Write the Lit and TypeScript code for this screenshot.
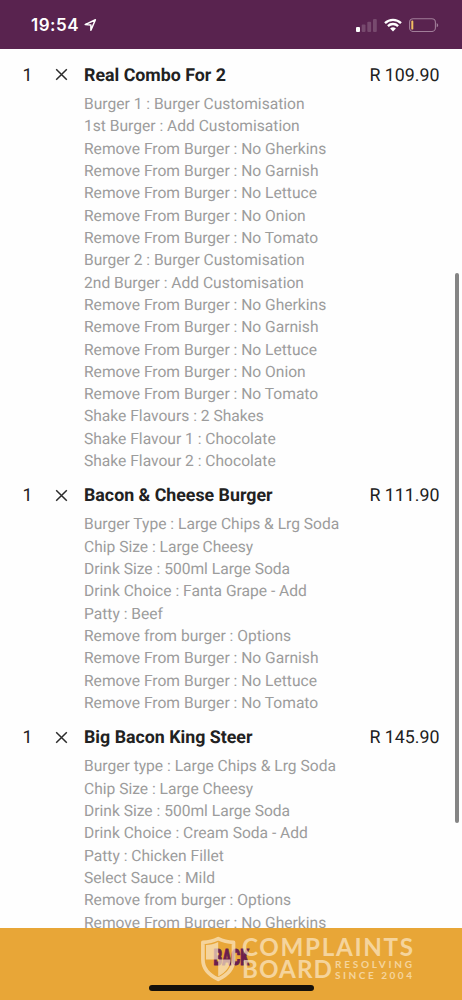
import { LitElement, html, css } from "lit";
import { customElement, property } from "lit/decorators.js";

interface OrderItem {
  qty: number;
  name: string;
  price: string;
  options: string[];
}

const ORDER: OrderItem[] = [
  {
    qty: 1,
    name: "Real Combo For 2",
    price: "R 109.90",
    options: [
      "Burger 1 : Burger Customisation",
      "1st Burger : Add Customisation",
      "Remove From Burger : No Gherkins",
      "Remove From Burger : No Garnish",
      "Remove From Burger : No Lettuce",
      "Remove From Burger : No Onion",
      "Remove From Burger : No Tomato",
      "Burger 2 : Burger Customisation",
      "2nd Burger : Add Customisation",
      "Remove From Burger : No Gherkins",
      "Remove From Burger : No Garnish",
      "Remove From Burger : No Lettuce",
      "Remove From Burger : No Onion",
      "Remove From Burger : No Tomato",
      "Shake Flavours : 2 Shakes",
      "Shake Flavour 1 : Chocolate",
      "Shake Flavour 2 : Chocolate",
    ],
  },
  {
    qty: 1,
    name: "Bacon & Cheese Burger",
    price: "R 111.90",
    options: [
      "Burger Type : Large Chips & Lrg Soda",
      "Chip Size : Large Cheesy",
      "Drink Size : 500ml Large Soda",
      "Drink Choice : Fanta Grape - Add",
      "Patty : Beef",
      "Remove from burger : Options",
      "Remove From Burger : No Garnish",
      "Remove From Burger : No Lettuce",
      "Remove From Burger : No Tomato",
    ],
  },
  {
    qty: 1,
    name: "Big Bacon King Steer",
    price: "R 145.90",
    options: [
      "Burger type : Large Chips & Lrg Soda",
      "Chip Size : Large Cheesy",
      "Drink Size : 500ml Large Soda",
      "Drink Choice : Cream Soda - Add",
      "Patty : Chicken Fillet",
      "Select Sauce : Mild",
      "Remove from burger : Options",
      "Remove From Burger : No Gherkins",
    ],
  },
];

@customElement("status-bar")
export class StatusBar extends LitElement {
  static styles = css`
    :host {
      display: flex;
      align-items: center;
      justify-content: space-between;
      box-sizing: border-box;
      height: 49px;
      padding: 1px 23px 0 31px;
      background: #59234f;
      color: #fff;
      font: 600 17px/20px Inter, sans-serif;
    }
    .left,
    .right {
      display: flex;
      align-items: center;
    }
    .left {
      gap: 5px;
    }
    .time {
      letter-spacing: 0.5px;
    }
    svg {
      display: block;
    }
    .wifi {
      margin: 0 7px 0 7px;
    }
  `;

  render() {
    return html`
      <div class="left">
        <span class="time">19:54</span>
        <svg width="13" height="14" viewBox="0 0 13 14">
          <path d="M1.2 6.6 11.4 1.7 6.9 12.2V7.1Z" fill="none" stroke="#fff" stroke-width="1.5" stroke-linejoin="round" />
        </svg>
      </div>
      <div class="right">
        <svg width="21" height="14" viewBox="0 0 21 14">
          <rect x="0" y="9" width="4" height="5" rx="1" fill="#fff" />
          <rect x="5.7" y="6.6" width="3.8" height="7.4" rx="1" fill="#774a6e" />
          <rect x="11.3" y="3.8" width="3.8" height="10.2" rx="1" fill="#774a6e" />
          <rect x="17" y="1" width="3.8" height="13" rx="1" fill="#774a6e" />
        </svg>
        <svg class="wifi" width="18" height="14" viewBox="0 0 18 14">
          <g fill="none" stroke="#fff" stroke-width="2.3">
            <path d="M1 5.1a11.4 11.4 0 0 1 16 0" />
            <path d="M3.9 8.1a7.3 7.3 0 0 1 10.2 0" />
          </g>
          <path d="M6.1 10.6a4.2 4.2 0 0 1 5.8 0L9 13.6Z" fill="#fff" />
        </svg>
        <svg width="30" height="14" viewBox="0 0 30 14">
          <rect x="0.6" y="0.7" width="25.8" height="12.8" rx="3.6" fill="none" stroke="#a17e99" stroke-width="1.1" />
          <rect x="2.3" y="2.6" width="2" height="9" rx="0.9" fill="#f2bd62" />
          <path d="M27.7 4.9c2 .9 2 3.5 0 4.4Z" fill="#a17e99" />
        </svg>
      </div>
    `;
  }
}

@customElement("order-item")
export class OrderItemRow extends LitElement {
  @property({ attribute: false }) item!: OrderItem;

  static styles = css`
    :host {
      display: grid;
      grid-template-columns: 32.5px 29px 1fr auto;
      align-items: center;
      row-gap: 5.4px;
      color: #212121;
      font: 400 17.8px/24px Roboto, sans-serif;
      text-rendering: geometricPrecision;
    }
    .name {
      font-weight: 700;
      white-space: nowrap;
    }
    .times {
      display: block;
      margin-bottom: 2px;
    }
    .options {
      grid-column: 3 / -1;
      margin: 0;
      padding: 0;
      list-style: none;
      color: #9c9c9c;
      font-size: 15.6px;
      line-height: 22.33px;
      white-space: nowrap;
    }
  `;

  render() {
    const { qty, name, price, options } = this.item;
    return html`
      <span>${qty}</span>
      <svg class="times" width="13" height="13" viewBox="0 0 13 13">
        <path d="M1.2 1.2 11.8 11.8M11.8 1.2 1.2 11.8" stroke="#2b2b2b" stroke-width="1.5" />
      </svg>
      <span class="name">${name}</span>
      <span class="price">${price}</span>
      <ul class="options">
        ${options.map((o) => html`<li>${o}</li>`)}
      </ul>
    `;
  }
}

@customElement("bottom-bar")
export class BottomBar extends LitElement {
  static styles = css`
    :host {
      display: flex;
      flex-direction: column;
      align-items: center;
      justify-content: space-between;
      box-sizing: border-box;
      height: 72px;
      padding: 18px 0 9px;
      position: relative;
      background: #e8a637;
    }
    .back {
      display: block;
    }
    .home {
      width: 165px;
      height: 6px;
      border-radius: 3px;
      background: #15110b;
    }
    .watermark {
      position: absolute;
      left: 196px;
      top: 4px;
    }
  `;

  render() {
    return html`
      <svg class="back" width="48" height="24" viewBox="0 0 48 24">
        <g transform="translate(6.5 19.3) scale(0.6 1)">
          <text x="0" y="0" textLength="59" lengthAdjust="spacingAndGlyphs" font-family="Roboto, sans-serif" font-weight="900" font-size="22" fill="#6b1f4d" stroke="#6b1f4d" stroke-width="1">BACK</text>
        </g>
      </svg>
      <svg class="watermark" width="224" height="52" viewBox="196 931 224 52">
        <g opacity="0.7" fill="#fbe8c8">
          <path d="M218.200 937.700c5 2.500 10.200 3.500 15.300 3.600v17.200c0 9-6 15.500-15.300 19.800c-9.300-4.300-15.300-10.800-15.300-19.800v-17.200c5.100-.1 10.300-1.100 15.300-3.600Z" fill="none" stroke="#fbe8c8" stroke-width="3.700" stroke-linejoin="round" />
          <path d="M218.200 941v17.500h-12.200v-14.500c4-.2 8.500-1 12.200-3Z" />
          <path d="M218.200 958.500h12.300c0 7-4.500 12.500-12.300 17Z" />
          <g font-family="Lato, sans-serif" font-weight="700">
            <text x="242" y="954.500" textLength="171" font-size="24.200">COMPLAINTS</text>
            <text x="242" y="977.300" textLength="90" font-size="24.200">BOARD</text>
            <text x="335" y="967" textLength="77" font-size="10">RESOLVING</text>
            <text x="335" y="977.500" textLength="77" font-size="10">SINCE 2004</text>
          </g>
        </g>
      </svg>
      <div class="home"></div>
    `;
  }
}

@customElement("app-root")
export class AppRoot extends LitElement {
  static styles = css`
    :host {
      display: flex;
      flex-direction: column;
      position: relative;
      height: 1000px;
      overflow: hidden;
      background: #fefefe;
    }
    .list {
      display: flex;
      flex-direction: column;
      gap: 11.6px;
      flex: 1;
      min-height: 0;
      overflow: hidden;
      box-sizing: border-box;
      padding: 14.5px 22.5px 0;
    }
    order-item {
      flex: none;
    }
    .scroll {
      position: absolute;
      right: 3px;
      top: 273px;
      width: 4px;
      height: 550px;
      border-radius: 2px;
      background: #858585;
    }
  `;

  render() {
    return html`
      <status-bar></status-bar>
      <main class="list">
        ${ORDER.map((item) => html`<order-item .item=${item}></order-item>`)}
      </main>
      <bottom-bar></bottom-bar>
      <div class="scroll"></div>
    `;
  }
}
